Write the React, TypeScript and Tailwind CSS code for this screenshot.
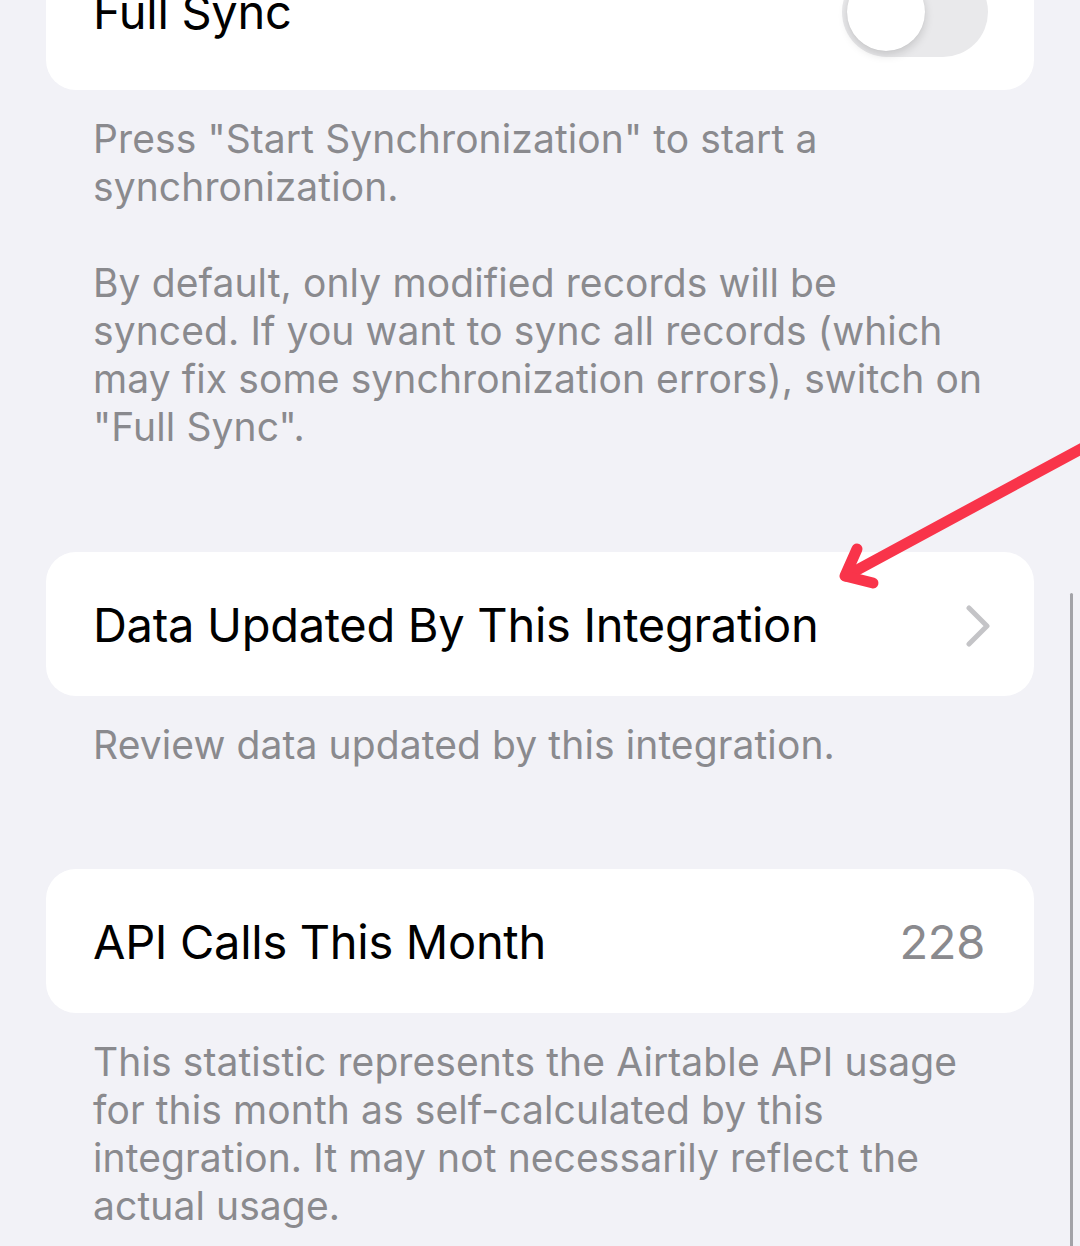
import React from "react";

const font = { fontFamily: "Inter, 'Noto Sans', sans-serif" };

const Footer = ({ children }: { children: React.ReactNode }) => (
  <div className="mt-[25px] pl-[47px] pr-[40px] text-[39px] leading-[48px] tracking-[0.1px] text-[#8a8a8e] whitespace-pre-line">
    {children}
  </div>
);

const Toggle = () => (
  <div className="relative h-[90px] w-[146px] rounded-full bg-[#e9e9eb]">
    <div className="absolute left-[5px] top-[6px] h-[78px] w-[78px] rounded-full bg-white shadow-[0_4px_10px_rgba(0,0,0,0.15),0_0_1px_rgba(0,0,0,0.1)]" />
  </div>
);

const Chevron = () => (
  <svg width="24" height="42" viewBox="0 0 24 42" fill="none">
    <path d="M3 3 L21 21 L3 39" stroke="#c4c4c7" strokeWidth="5" strokeLinecap="round" strokeLinejoin="round" />
  </svg>
);

export default function App() {
  return (
    <div style={font} className="relative min-h-[1246px] overflow-hidden bg-[#f2f2f7] px-[46px]">
      <div className="mt-[-66px] flex h-[156px] items-center justify-between rounded-[30px] bg-white pl-[47px] pr-[46px] tracking-[-0.3px]">
        <span className="text-[47px] text-black">Full Sync</span>
        <Toggle />
      </div>
      <Footer>
        {'Press "Start Synchronization" to start a synchronization.\n\nBy default, only modified records will be synced. If you want to sync all records (which may fix some synchronization errors), switch on "Full Sync".'}
      </Footer>

      <div className="mt-[101px] flex h-[144px] items-center justify-between rounded-[30px] bg-white pl-[47px] pr-[44px] pt-[3px] tracking-[-0.3px]">
        <span className="text-[47px] text-black">Data Updated By This Integration</span>
        <Chevron />
      </div>
      <Footer>Review data updated by this integration.</Footer>

      <div className="mt-[100px] flex h-[144px] items-center justify-between rounded-[30px] bg-white pl-[47px] pr-[49px] pt-[3px] tracking-[-0.3px]">
        <span className="text-[47px] text-black">API Calls This Month</span>
        <span className="text-[47px] text-[#8a8a8e]">228</span>
      </div>
      <Footer>
        This statistic represents the Airtable API usage for this month as self-calculated by this integration. It may not necessarily reflect the actual usage.
      </Footer>

      {/* scroll indicator */}
      <div className="absolute right-[7px] top-[593px] h-[660px] w-[3px] rounded-full bg-[#a3a3a8]" />

      {/* annotation arrow */}
      <svg className="absolute left-0 top-0" width="1080" height="1246" viewBox="0 0 1080 1246" fill="none">
        <g stroke="#f9344a" strokeWidth="11" strokeLinecap="round" strokeLinejoin="round">
          <path d="M1090 444 L846 576" />
          <path d="M857 549 L845 576 L873 583" />
        </g>
      </svg>
    </div>
  );
}
